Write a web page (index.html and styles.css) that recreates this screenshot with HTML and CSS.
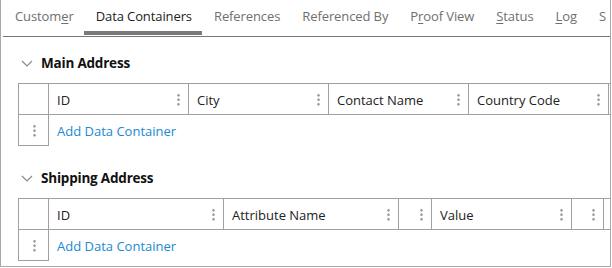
FILE: index.html
```html
<!DOCTYPE html>
<html lang="en">
<head>
    <title>data containers</title>
    <link rel="stylesheet" href="styles.css">
</head>
<body>
  <div class="frame">
    <div class="tabs">
      <div class="tab">Custom<u>e</u>r</div>
      <div class="tab active">Data Containers</div>
      <div class="tab">References</div>
      <div class="tab">Referenced By</div>
      <div class="tab">P<u>r</u>oof View</div>
      <div class="tab"><u>S</u>tatus</div>
      <div class="tab"><u>L</u>og</div>
      <div class="tab">S</div>
    </div>

    <div class="section first">
      <div class="sec_head">
        <svg class="chev" width="12" height="7" viewBox="0 0 12 7"><path d="M1 1 L6 6 L11 1" fill="none" stroke="#8a8a8a" stroke-width="1.2"/></svg>
        <span>Main Address</span>
      </div>
      <div class="grid">
        <div class="hrow">
          <div class="cell c30"></div>
          <div class="cell c140"><span>ID</span><i class="dots"></i></div>
          <div class="cell c140"><span>City</span><i class="dots"></i></div>
          <div class="cell c140"><span>Contact Name</span><i class="dots"></i></div>
          <div class="cell c140"><span>Country Code</span><i class="dots"></i></div>
          <div class="cell c140"><span></span><i class="dots"></i></div>
        </div>
        <div class="addrow">
          <div class="addcell"><i class="dots"></i></div>
          <a class="addlink">Add Data Container</a>
        </div>
      </div>
    </div>

    <div class="section">
      <div class="sec_head">
        <svg class="chev" width="12" height="7" viewBox="0 0 12 7"><path d="M1 1 L6 6 L11 1" fill="none" stroke="#8a8a8a" stroke-width="1.2"/></svg>
        <span>Shipping Address</span>
      </div>
      <div class="grid">
        <div class="hrow last">
          <div class="cell c30"></div>
          <div class="cell c175"><span>ID</span><i class="dots"></i></div>
          <div class="cell c175"><span>Attribute Name</span><i class="dots"></i></div>
          <div class="cell c33"><span></span><i class="dots"></i></div>
          <div class="cell c140"><span>Value</span><i class="dots"></i></div>
          <div class="cell c33"><span></span><i class="dots"></i></div>
        </div>
        <div class="addrow">
          <div class="addcell"><i class="dots"></i></div>
          <a class="addlink">Add Data Container</a>
        </div>
      </div>
    </div>
  </div>
</body>
</html>
```

FILE: styles.css
```css
*{
    margin: 0;
    box-sizing: border-box;
}
body{
    background-color: #fff;
    font-family: "Open Sans", sans-serif;
    font-size: 13px;
    color: #222;
}
.frame{
    width: 611px;
    height: 267px;
    border-left: 1px solid #a8a8a8;
    border-right: 1px solid #a8a8a8;
    border-bottom: 1px solid #a8a8a8;
    overflow: hidden;
}
.tabs{
    display: flex;
    height: 37px;
    margin-left: 2px;
    border-bottom: 1px solid #767676;
    white-space: nowrap;
}
.tab{
    padding: 7px 10px 0 12px;
    color: #6f6f6f;
    letter-spacing: -0.1px;
}
.tab u{
    text-decoration-thickness: 1px;
    text-underline-offset: 2px;
}
.tab.active{
    color: #222;
    border-bottom: 4px solid #7a7a7a;
    margin-bottom: 1px;
}
.section{
    padding: 0 0 0 17px;
}
.section.first{
    padding-top: 10px;
}
.sec_head{
    display: flex;
    align-items: center;
    height: 32px;
    margin-bottom: 4px;
    font-weight: 700;
    font-size: 13.5px;
    color: #111;
    letter-spacing: -0.2px;
}
.chev{
    margin-left: 3px;
    margin-right: 8px;
}
.grid{
    margin-bottom: 16px;
}
.hrow{
    display: flex;
    height: 32px;
    border-top: 1px solid #a0a0a0;
    border-bottom: 1px solid #a0a0a0;
}
.cell{
    flex: none;
    display: flex;
    align-items: center;
    justify-content: space-between;
    border-left: 1px solid #a0a0a0;
    padding: 1px 8px 0 8px;
}
.hrow.last .cell:last-child{
    border-right: 1px solid #a0a0a0;
}
.c30{ width: 30px; }
.c33{ width: 33px; }
.c140{ width: 140px; }
.c175{ width: 175px; }
.dots{
    display: block;
    width: 3px;
    height: 13px;
    background-image: radial-gradient(circle, #9a9a9a 1.2px, transparent 1.4px);
    background-size: 3px 4.5px;
    background-position: 0 0;
}
.addrow{
    display: flex;
    align-items: center;
    height: 31px;
}
.addcell{
    width: 31px;
    height: 31px;
    border-left: 1px solid #a0a0a0;
    border-right: 1px solid #a0a0a0;
    border-bottom: 1px solid #a0a0a0;
    display: flex;
    align-items: center;
    justify-content: flex-end;
    padding-right: 12px;
}
.addlink{
    color: #1a8ad2;
    margin-left: 8px;
}
```
